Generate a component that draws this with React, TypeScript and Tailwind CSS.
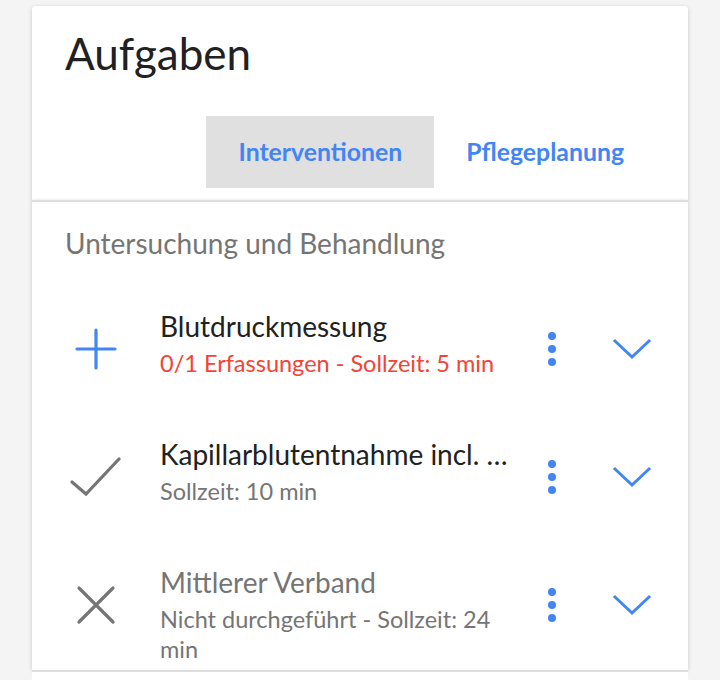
import React from "react";

const BLUE = "#4285f4";

function Dots() {
  return (
    <svg width="10" height="36" viewBox="0 0 10 36">
      <circle cx="5" cy="5" r="4" fill={BLUE} />
      <circle cx="5" cy="18" r="4" fill={BLUE} />
      <circle cx="5" cy="31" r="4" fill={BLUE} />
    </svg>
  );
}

function Chevron() {
  return (
    <svg width="40" height="24" viewBox="0 0 40 24">
      <path d="M3 4 L20 20 L37 4" fill="none" stroke={BLUE} strokeWidth="3" strokeLinecap="square" />
    </svg>
  );
}

function PlusIcon() {
  return (
    <svg width="42" height="42" viewBox="0 0 42 42">
      <path d="M21 2 V40 M2 21 H40" stroke={BLUE} strokeWidth="3.2" strokeLinecap="round" />
    </svg>
  );
}

function CheckIcon() {
  return (
    <svg width="52" height="40" viewBox="0 0 52 40">
      <path d="M2 25 L16 37 L49 2" fill="none" stroke="#757575" strokeWidth="3.2" strokeLinecap="round" />
    </svg>
  );
}

function CrossIcon() {
  return (
    <svg width="40" height="40" viewBox="0 0 40 40">
      <path d="M3 3 L37 37 M37 3 L3 37" stroke="#757575" strokeWidth="3.2" strokeLinecap="round" />
    </svg>
  );
}

type Item = {
  icon: React.ReactNode;
  title: string;
  titleClass: string;
  sub: string;
  subClass: string;
  truncate?: boolean;
};

const items: Item[] = [
  {
    icon: <PlusIcon />,
    title: "Blutdruckmessung",
    titleClass: "text-[#212121]",
    sub: "0/1 Erfassungen - Sollzeit: 5 min",
    subClass: "text-[#f44336]",
  },
  {
    icon: <CheckIcon />,
    title: "Kapillarblutentnahme incl. Blutzuckerbestimmung",
    titleClass: "text-[#212121]",
    sub: "Sollzeit: 10 min",
    subClass: "text-[#757575]",
    truncate: true,
  },
  {
    icon: <CrossIcon />,
    title: "Mittlerer Verband",
    titleClass: "text-[#757575]",
    sub: "Nicht durchgeführt - Sollzeit: 24 min",
    subClass: "text-[#757575]",
  },
];

export default function App() {
  return (
    <div
      className="h-[680px] overflow-hidden bg-[#f4f4f4] pt-[6px]"
      style={{ fontFamily: "Lato, 'Noto Sans', sans-serif" }}
    >
      <div className="mx-8">
        {/* Header card */}
        <div className="rounded-t-[4px] bg-white px-[32px] pb-[12px] shadow-[0_1px_4px_rgba(0,0,0,0.18)]">
          <div className="pl-[1px] pt-[19px] text-[44px] leading-[56px] text-[#212121]">Aufgaben</div>
          <div className="mt-[35px] flex justify-end">
            <div className="flex h-[72px] items-center bg-[#e0e0e0] px-[32px] text-[24.8px] font-bold text-[#4285f4]">
              Interventionen
            </div>
            <div className="flex h-[72px] items-center px-[32px] text-[24.8px] font-bold text-[#4285f4]">
              Pflegeplanung
            </div>
          </div>
        </div>
        {/* Section panel */}
        <div className="border-t-2 border-[#dedede] bg-white shadow-[0_1px_4px_rgba(0,0,0,0.18)]">
          <div className="px-[33px] pt-[25px] text-[28px] leading-[32px] text-[#757575]">
            Untersuchung und Behandlung
          </div>
          <div className="flex flex-col gap-[44px] pt-[48px] pb-[6px]">
            {items.map((it, i) => (
              <div key={i} className="flex items-start pl-[32px] pr-[28px]">
                <div className="flex h-[84px] w-[64px] shrink-0 items-center justify-center">
                  {it.icon}
                </div>
                <div className="ml-[32px] min-w-0 flex-1">
                  <div
                    className={`text-[28px] leading-[38px] ${it.titleClass} ${
                      it.truncate ? "overflow-hidden text-ellipsis whitespace-nowrap" : ""
                    }`}
                  >
                    {it.title}
                  </div>
                  <div className={`mt-[3px] text-[23.5px] leading-[30px] ${it.subClass}`}>{it.sub}</div>
                </div>
                <div className="ml-[16px] flex h-[84px] w-[48px] shrink-0 items-center justify-center">
                  <Dots />
                </div>
                <div className="ml-[28px] flex h-[84px] w-[56px] shrink-0 items-center justify-center">
                  <Chevron />
                </div>
              </div>
            ))}
          </div>
        </div>
        <div className="h-[40px] border-t-2 border-[#dedede] bg-white" />
      </div>
    </div>
  );
}
